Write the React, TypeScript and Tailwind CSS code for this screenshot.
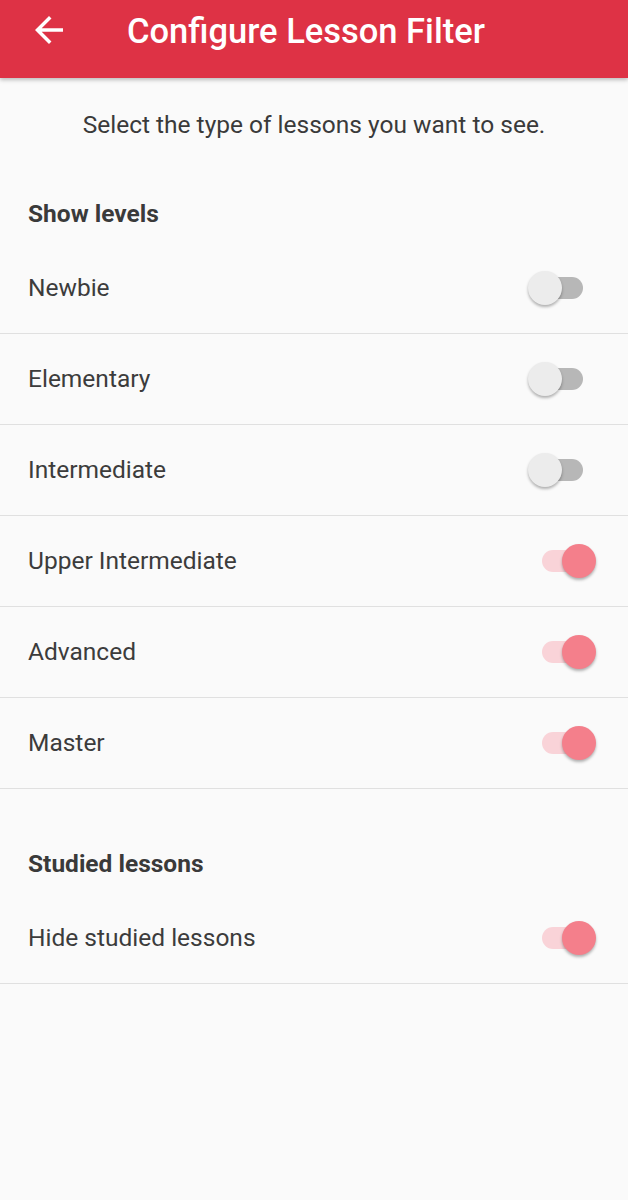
import { useState } from "react";

type Level = { name: string; on: boolean };

const initialLevels: Level[] = [
  { name: "Newbie", on: false },
  { name: "Elementary", on: false },
  { name: "Intermediate", on: false },
  { name: "Upper Intermediate", on: true },
  { name: "Advanced", on: true },
  { name: "Master", on: true },
];

function Toggle({ on, onClick }: { on: boolean; onClick: () => void }) {
  return (
    <button type="button" onClick={onClick} className="flex items-center w-[72px] h-[40px] shrink-0">
      {on ? (
        <>
          <span className="ml-[14px] w-[52px] h-[22px] rounded-full bg-[#f9d3d8]" />
          <span className="relative z-10 -ml-[32px] w-[34px] h-[34px] rounded-full bg-[#f47f8b] shadow-[0_2px_3px_rgba(0,0,0,0.3)]" />
        </>
      ) : (
        <>
          <span className="relative z-10 w-[34px] h-[34px] rounded-full bg-[#ececec] shadow-[0_2px_3px_rgba(0,0,0,0.3)]" />
          <span className="-ml-[32px] w-[53px] h-[22px] rounded-full bg-[#b7b7b7]" />
        </>
      )}
    </button>
  );
}

function Row({ label, on, onClick }: { label: string; on: boolean; onClick: () => void }) {
  return (
    <div className="flex items-center justify-between h-[91px] pl-[28px] pr-[28px] border-b border-[#e0e0e0]">
      <span className="text-[24.5px] leading-[30px] text-[#3c3c3c]">{label}</span>
      <Toggle on={on} onClick={onClick} />
    </div>
  );
}

export default function App() {
  const [levels, setLevels] = useState(initialLevels);
  const [hideStudied, setHideStudied] = useState(true);

  return (
    <div
      className="min-h-[1200px] bg-[#fafafa]"
      style={{ fontFamily: "Roboto, 'Noto Sans', sans-serif" }}
    >
      {/* Toolbar */}
      <div className="h-[78px] bg-[#de3245] flex items-start shadow-[0_2px_4px_rgba(0,0,0,0.25)]">
        <svg viewBox="0 0 24 24" className="w-[42px] h-[42px] ml-[28px] mt-[9px]" fill="white">
          <path d="M20 11H7.83l5.59-5.59L12 4l-8 8 8 8 1.41-1.41L7.83 13H20v-2z" />
        </svg>
        <h1 className="ml-[57px] mt-[11px] text-[34.5px] leading-[40px] font-medium text-white">
          Configure Lesson Filter
        </h1>
      </div>

      <p className="mt-[32px] text-center text-[24.5px] leading-[30px] text-[#3a3a3a]">
        Select the type of lessons you want to see.
      </p>

      <div className="pt-[59px] pb-[14px] pl-[28px] text-[24.5px] leading-[30px] font-bold text-[#3a3a3a]">
        Show levels
      </div>
      {levels.map((lv, i) => (
        <Row
          key={lv.name}
          label={lv.name}
          on={lv.on}
          onClick={() =>
            setLevels((prev) => prev.map((p, j) => (j === i ? { ...p, on: !p.on } : p)))
          }
        />
      ))}

      <div className="pt-[60px] pb-[14px] pl-[28px] text-[24.5px] leading-[30px] font-bold text-[#3a3a3a]">
        Studied lessons
      </div>
      <Row label="Hide studied lessons" on={hideStudied} onClick={() => setHideStudied((v) => !v)} />
    </div>
  );
}
